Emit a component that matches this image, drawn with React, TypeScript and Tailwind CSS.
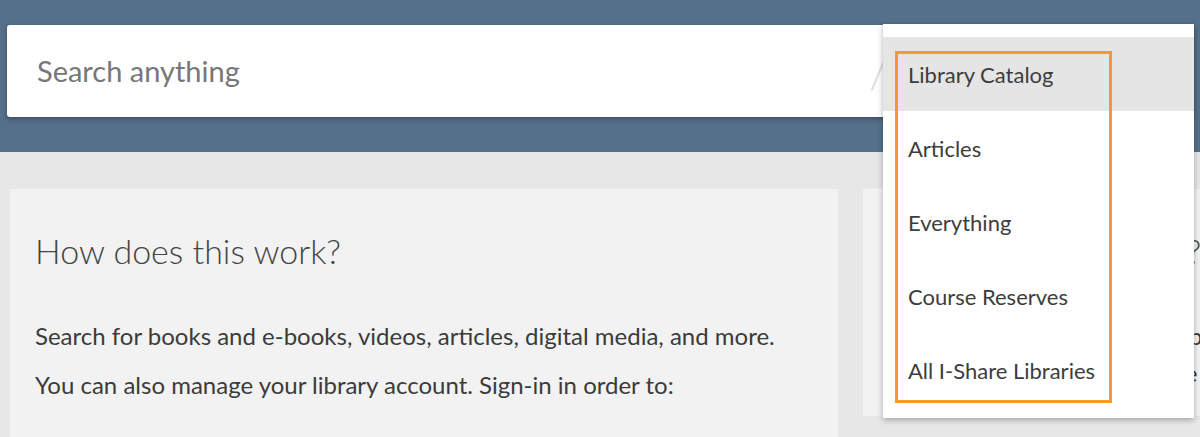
import { useState } from "react";

const scopes = ["Library Catalog", "Articles", "Everything", "Course Reserves", "All I-Share Libraries"];

export default function App() {
  const [active, setActive] = useState("Library Catalog");

  return (
    <div className="relative h-[437px] w-[1200px] overflow-hidden bg-[#e7e7e7] font-['Lato',sans-serif] text-[#3b3b3b]">
      {/* Header band with search */}
      <div className="h-[152px] bg-[#55708a] px-[7px] pt-[25px]">
        <div className="flex h-[92px] items-center rounded-[3px] bg-white pl-[30px] shadow-[0_2px_5px_rgba(0,0,0,0.3)]">
          <span className="flex-1 text-[29px] text-[#777]">Search anything</span>
          <span className="mr-[305px] text-[44px] font-light leading-none text-[#dcdcdc]">/</span>
        </div>
      </div>

      {/* Content cards */}
      <div className="flex pl-[10px] pt-[37px]">
        <div className="h-[300px] w-[828px] shrink-0 bg-[#f2f2f2] px-[25px] pt-[38px]">
          <h2 className="text-[34px] font-light leading-[48px] text-[#444]">How does this work?</h2>
          <div className="mt-[45px] space-y-[18px] text-[24px] leading-[31px]">
            <p>Search for books and e-books, videos, articles, digital media, and more.</p>
            <p>You can also manage your library account. Sign-in in order to:</p>
          </div>
        </div>
        <div className="ml-[25px] h-[227px] w-[400px] shrink-0 bg-[#f2f2f2] px-[25px] pt-[38px]">
          <h2 className="whitespace-nowrap text-[34px] font-light leading-[48px] text-[#444]">Need help searching?</h2>
          <div className="mt-[45px] space-y-[6px] whitespace-nowrap text-[24px] leading-[31px]">
            <p>Ask a librarian in person or - by</p>
            <p>chat, email, or phone anytime to</p>
          </div>
        </div>
      </div>

      {/* Scope dropdown */}
      <div className="absolute left-[883px] top-[24px] w-[311px] bg-white pb-[11px] pt-[13px] shadow-[0_2px_6px_rgba(0,0,0,0.3)]">
        {scopes.map((s) => (
          <button
            key={s}
            onClick={() => setActive(s)}
            className={
              "flex h-[74px] w-full items-center pl-[25px] text-left text-[22px] text-[#3d3d3d] " +
              (active === s ? "bg-[#e5e5e5]" : "bg-white")
            }
          >
            {s}
          </button>
        ))}
      </div>

      {/* Highlight annotation */}
      <div className="pointer-events-none absolute left-[895px] top-[51px] h-[352px] w-[217px] border-[3px] border-[#f7972e]" />
    </div>
  );
}
